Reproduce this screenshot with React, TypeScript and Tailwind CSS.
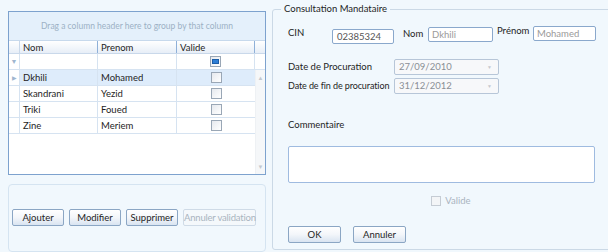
import React from 'react';

const rows = [
  { nom: 'Dkhili', prenom: 'Mohamed', selected: true },
  { nom: 'Skandrani', prenom: 'Yezid' },
  { nom: 'Triki', prenom: 'Foued' },
  { nom: 'Zine', prenom: 'Meriem' },
];

function Check({ filled }: { filled?: boolean }) {
  return (
    <div className="w-[11px] h-[11px] border border-[#9aa7b6] bg-gradient-to-br from-[#e6e9ee] to-white flex items-center justify-center">
      {filled && <div className="w-[7px] h-[5px] bg-[#2f7fd6] border border-[#1d5ea8]" />}
    </div>
  );
}

function Btn({ label, w, disabled }: { label: string; w: string; disabled?: boolean }) {
  return (
    <button
      className={`${w} h-[17px] rounded-[2px] border text-[9.5px] leading-none whitespace-nowrap ${
        disabled
          ? 'border-[#cfdbe7] bg-[#f4f8fb] text-[#a9b4bf] tracking-[-0.2px]'
          : 'border-[#8ba6c4] bg-gradient-to-b from-white via-[#f3f6fa] to-[#d9e4f1] text-[#1e1e1e]'
      }`}
    >
      {label}
    </button>
  );
}

function DateBox({ value }: { value: string }) {
  return (
    <div className="w-[105px] h-[16px] border border-[#b7c6d8] rounded-[2px] bg-[#f7f8fa] flex items-center pl-[4px] pr-[6px] text-[9.5px] text-[#8a8f96]">
      <span className="flex-1">{value}</span>
      <span className="text-[5px] text-[#c5c9ce]">▼</span>
    </div>
  );
}

export default function App() {
  return (
    <div
      className="w-[608px] h-[252px] overflow-hidden bg-[#f1f8fd] flex text-[#1e1e1e]"
      style={{ fontFamily: 'Lato, "Open Sans", sans-serif' }}
    >
      <div className="w-[266px] pl-[8px] pt-[11px] flex flex-col shrink-0">
        {/* grid */}
        <div className="h-[172px] border border-[#7da2ce] bg-white flex flex-col">
          <div className="h-[29px] bg-[#e4f0fb] border-b border-[#c7d9ec] flex items-center justify-center text-[8.5px] text-[#9cb0c5]">
            Drag a column header here to group by that column
          </div>
          <div className="h-[13px] flex text-[9.5px] leading-[13px] bg-gradient-to-b from-white to-[#e7eef7] border-b border-[#c9d8ea]">
            <div className="w-[11px] border-r border-[#c9d8ea]" />
            <div className="w-[78px] pl-[3px] border-r border-[#8fb0d8]">Nom</div>
            <div className="w-[79px] pl-[3px] border-r border-[#8fb0d8]">Prenom</div>
            <div className="w-[78px] pl-[3px] border-r border-[#8fb0d8]">Valide</div>
            <div className="flex-1" />
          </div>
          <div className="h-[16px] flex border-b border-[#d6e3f1]">
            <div className="w-[11px] border-r border-[#d6e3f1] flex items-center justify-center text-[7px] text-[#9fb6cf]">▼</div>
            <div className="w-[78px] border-r border-[#d6e3f1]" />
            <div className="w-[79px] border-r border-[#d6e3f1]" />
            <div className="w-[78px] border-r border-[#d6e3f1] flex items-center justify-center">
              <Check filled />
            </div>
            <div className="flex-1" />
          </div>
          <div className="flex flex-1">
            <div className="flex-1 flex flex-col">
              {rows.map((r) => (
                <div key={r.nom} className="h-[16px] flex text-[9.5px] leading-[15px] border-b border-[#d6e3f1]">
                  <div className="w-[11px] border-r border-[#d6e3f1] flex items-center justify-center text-[6px] text-[#9fb6cf]">
                    {r.selected ? '▶' : ''}
                  </div>
                  <div className={`flex flex-1 ${r.selected ? 'bg-[#deecfb]' : ''}`}>
                    <div className="w-[78px] pl-[3px] border-r border-[#d6e3f1]">{r.nom}</div>
                    <div className="w-[79px] pl-[3px] border-r border-[#d6e3f1]">{r.prenom}</div>
                    <div className="w-[78px] flex items-center justify-center">
                      <Check />
                    </div>
                  </div>
                </div>
              ))}
            </div>
            <div className="w-[11px] bg-[#f5f7f9] border-l border-[#eef1f4] flex flex-col items-center justify-between py-[3px] text-[6px] text-[#c2c8cf]">
              <span>▲</span>
              <span>▼</span>
            </div>
          </div>
        </div>
        {/* actions panel */}
        <div className="mt-[9px] h-[70px] border border-[#d5e4f1] rounded-[4px] pt-[24px] pl-[3px] flex gap-[5px]">
          <Btn label="Ajouter" w="w-[52px]" />
          <Btn label="Modifier" w="w-[52px]" />
          <Btn label="Supprimer" w="w-[52px]" />
          <Btn label="Annuler validation" w="w-[73px]" disabled />
        </div>
      </div>

      <fieldset className="ml-[6px] mt-[3px] w-[328px] h-[247px] border border-[#cbd9e6] rounded-[3px] px-[15px] pt-[10px] text-[9.5px] leading-[12px]">
        <legend className="-ml-[7px] px-[3px] text-[9.5px] leading-[12px]">Consultation Mandataire</legend>
        <div className="flex items-start">
          <span className="w-[44px] mt-[2px]">CIN</span>
          <div className="w-[62px] h-[15px] mt-[4px] border border-[#8aa8cc] rounded-[2px] bg-white pl-[4px] leading-[13px] text-[#555]">
            02385324
          </div>
          <span className="ml-[9px] w-[25px] mt-[3px]">Nom</span>
          <div className="w-[65px] h-[15px] mt-[2px] border border-[#8aa8cc] rounded-[2px] bg-white pl-[3px] leading-[13px] text-[#9a9a9a]">
            Dkhili
          </div>
          <span className="ml-[4px] w-[36px] mt-[0px]">Prénom</span>
          <div className="w-[63px] h-[15px] mt-[1px] border border-[#8aa8cc] rounded-[2px] bg-white pl-[3px] leading-[13px] text-[#9a9a9a]">
            Mohamed
          </div>
        </div>
        <div className="mt-[15px] flex items-center">
          <span className="w-[106px] whitespace-nowrap">Date de Procuration</span>
          <DateBox value="27/09/2010" />
        </div>
        <div className="mt-[3px] flex items-center">
          <span className="w-[106px] whitespace-nowrap text-[9px] tracking-[-0.1px]">Date de fin de procuration</span>
          <DateBox value="31/12/2012" />
        </div>
        <div className="mt-[25px]">Commentaire</div>
        <div className="mt-[15px] w-[307px] h-[37px] border border-[#9fbbe0] rounded-[2px] bg-white" />
        <div className="mt-[12px] flex items-center justify-center gap-[4px] text-[#a9b4bf] pl-[18px]">
          <div className="w-[10px] h-[10px] border border-[#c5ccd4] bg-[#f3f5f7]" />
          <span>Valide</span>
        </div>
        <div className="mt-[19px] flex gap-[12px]">
          <Btn label="OK" w="w-[53px]" />
          <Btn label="Annuler" w="w-[53px]" />
        </div>
      </fieldset>
    </div>
  );
}
